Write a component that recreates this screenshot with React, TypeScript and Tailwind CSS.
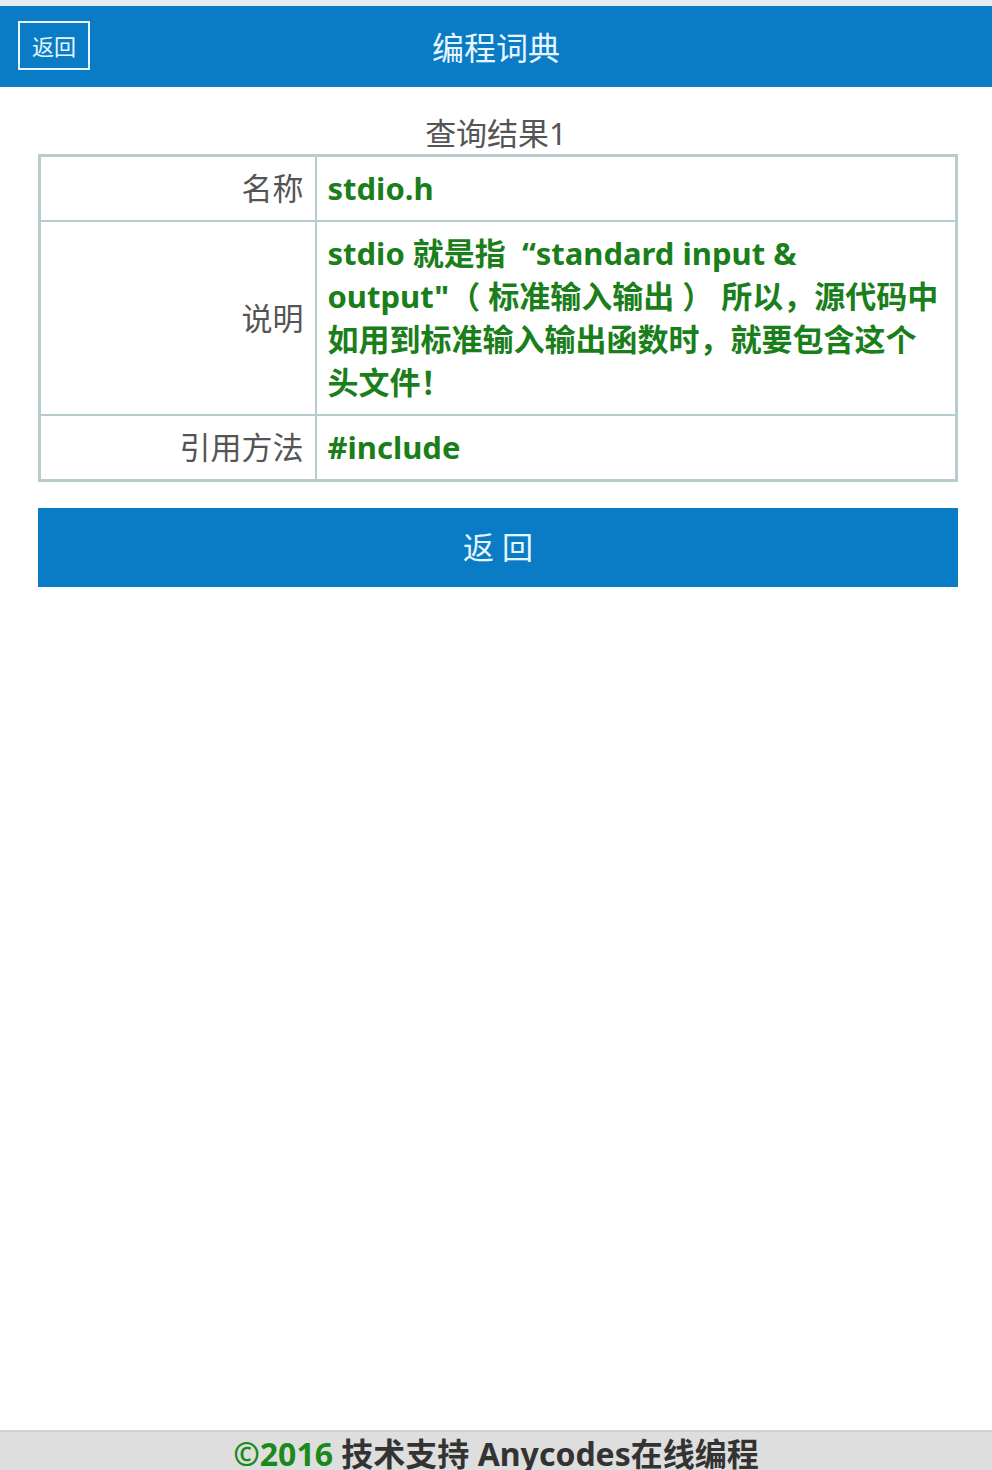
import React from 'react';

interface Row {
    label: string;
    value: React.ReactNode;
}

const rows: Row[] = [
    { label: "名称", value: "stdio.h" },
    {
        label: "说明",
        value: (
            <>
                stdio 就是指 &nbsp;“standard input &amp;
                <br />
                output"（ 标准输入输出 ） 所以，源代码中
                <br />
                如用到标准输入输出函数时，就要包含这个
                <br />
                头文件！
            </>
        ),
    },
    { label: "引用方法", value: "#include" },
];

const App = () => {
    return (
        <div
            className="w-full h-[1470px] flex flex-col bg-white overflow-hidden"
            style={{ fontFamily: '"Noto Sans", "Noto Sans CJK SC", sans-serif' }}
        >
            {/* top strip */}
            <div className="h-[6px] bg-[#e6edf2]" />

            {/* Header */}
            <header className="relative h-[81px] bg-[#0a7cc6] flex items-center justify-center">
                <button className="absolute left-[18px] top-[15px] w-[72px] h-[49px] border-2 border-[#e8f6ff] text-[#e8f6ff] text-[22px] leading-none">
                    返回
                </button>
                <h1 className="text-[#e8f6ff] text-[32px] leading-none pt-[3px]">编程词典</h1>
            </header>

            {/* Content */}
            <main className="px-[38px] pt-[31px]">
                <p className="text-center text-[31px] leading-none text-[#555] mb-[5px]">
                    查询结果1
                </p>

                <table className="w-[920px] border-collapse border-[3px] border-[#b7cdcd]">
                    <tbody>
                        {rows.map((row) => (
                            <tr key={row.label} className="border-b-2 border-[#b7cdcd] last:border-b-0">
                                <td className="w-[276px] text-right align-middle pr-[11px] text-[31px] leading-[43px] text-[#555] border-r-2 border-[#b7cdcd]">
                                    {row.label}
                                </td>
                                <td className="pl-[11px] pr-[8px] py-[10px] text-[31px] leading-[43px] font-bold text-[#1a7e1a] whitespace-nowrap">
                                    {row.value}
                                </td>
                            </tr>
                        ))}
                    </tbody>
                </table>

                <button className="mt-[26px] w-[920px] h-[79px] bg-[#0a7cc6] text-[#e8f6ff] text-[31px]">
                    返 回
                </button>
            </main>

            {/* Footer */}
            <footer className="mt-auto h-[40px] bg-[#dedede] border-t-2 border-[#cfcfcf] flex justify-center pt-[2px] overflow-hidden">
                <p className="text-[32px] leading-[40px] font-bold text-[#333] whitespace-nowrap">
                    <span className="text-[#1a8a1a]">©2016</span> 技术支持 Anycodes在线编程
                </p>
            </footer>
        </div>
    );
};

export default App;
